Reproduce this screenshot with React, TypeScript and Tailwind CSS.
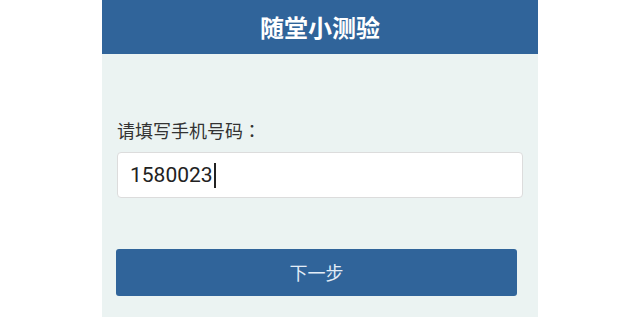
import React from 'react';

export default function App() {
  return (
    <div className="min-h-screen bg-white">
      <div className="mx-auto w-[436px] h-[317px] bg-[#ebf3f2] flex flex-col font-['Roboto','Noto_Sans_CJK_SC',sans-serif]">
        <div className="h-[54px] bg-[#30649a] flex items-center justify-center">
          <h1 className="text-[24px] font-bold text-white leading-none font-['Noto_Sans_CJK_SC',sans-serif]">随堂小测验</h1>
        </div>
        <div className="pl-[15px] pr-[15px] pt-[63px]">
          <p className="text-[18px] leading-[26px] text-[#333] font-['Noto_Sans_CJK_SC',sans-serif]">
            请填写手机号码<span className="font-['Noto_Sans_CJK_TC',sans-serif]">：</span>
          </p>
          <div className="mt-[9px] h-[46px] bg-white border border-[#dcdcdc] rounded-[4px] flex items-center pl-[12px]">
            <span className="text-[21px] text-[#222] leading-none">1580023</span>
            <span className="w-[2px] h-[25px] bg-[#222] ml-[1px]" />
          </div>
        </div>
        <div className="pl-[14px] pr-[21px] mt-[51px]">
          <button className="w-full h-[47px] bg-[#30649a] rounded-[3px] text-[18px] text-[#e3edf7] font-['Noto_Sans_CJK_SC',sans-serif]">下一步</button>
        </div>
      </div>
    </div>
  );
}
